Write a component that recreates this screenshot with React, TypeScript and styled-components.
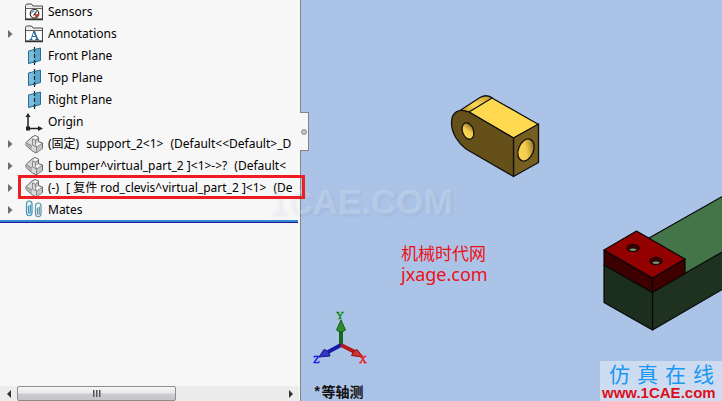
import React from "react";
import styled, { createGlobalStyle } from "styled-components";

const GlobalStyle = createGlobalStyle`
  * { box-sizing: border-box; }
  body { margin: 0; font-family: "Noto Sans", "Noto Sans CJK SC", sans-serif; }
`;

const Workspace = styled.div`
  position: relative;
  display: grid;
  grid-template-columns: 301px minmax(0, 1fr);
  height: 100vh;
  overflow: hidden;
  background: #abc3e6;
`;

const Panel = styled.aside`
  position: relative;
  display: flex;
  flex-direction: column;
  justify-content: space-between;
  min-height: 0;
  background: #f7f7f7;
  border-right: 1px solid #858585;
`;

const Tree = styled.ul`
  list-style: none;
  margin: 0 2px 0 0;
  padding: 1px 0;
  border-bottom: 1px solid #2616a0;
  box-shadow: inset 0 -2px #3289cb;
`;

const Row = styled.li`
  position: relative;
  display: grid;
  grid-template-columns: 24px 24px minmax(0, 1fr);
  align-items: center;
  height: 22px;
`;

const Expander = styled.button`
  display: flex;
  align-items: center;
  height: 20px;
  padding: 0 0 0 8px;
  border: 0;
  background: none;
`;

const Label = styled.span`
  grid-column: 3;
  display: flex;
  gap: 7px;
  overflow: hidden;
  white-space: nowrap;
  font-size: 12px;
  line-height: 22px;
  color: #000;
`;

const IconCell = styled.span`
  grid-column: 2;
  display: flex;
`;

const Highlight = styled.span`
  position: absolute;
  z-index: 3;
  inset: -2px -7px 0 18px;
  border: 3px solid #ee1c25;
  pointer-events: none;
`;

const Scroller = styled.div`
  display: flex;
  height: 15px;
  margin-right: 1px;
  background: #ececec;
`;

const ScrollButton = styled.button`
  display: flex;
  align-items: center;
  justify-content: center;
  width: 17px;
  padding: 0;
  border: 0;
  background: none;
`;

const Track = styled.div`
  flex: 1;
  display: flex;
`;

const Thumb = styled.button`
  display: flex;
  align-items: center;
  justify-content: center;
  gap: 1px;
  width: 60%;
  padding: 0;
  border: 1px solid #8d8d8d;
  border-radius: 2px;
  background: linear-gradient(#f6f6f6 0%, #e8e8e8 48%, #cdcdd0 52%, #c4c5c9 100%);
`;

const Grip = styled.i`
  width: 2px;
  height: 7px;
  background: linear-gradient(90deg, #555 50%, #999 50%);
`;

const Collapse = styled.button`
  position: absolute;
  z-index: 2;
  left: 300px;
  top: 112px;
  width: 9px;
  height: 39px;
  display: flex;
  align-items: center;
  justify-content: center;
  padding: 0;
  border: 1px solid #858585;
  border-left: 0;
  background: #f7f7f7;
`;

const Knob = styled.i`
  flex: none;
  width: 6px;
  height: 6px;
  border: 1px solid #8c8c8c;
  border-radius: 50%;
  background: #c6c6c6;
`;

const Viewport = styled.main`
  position: relative;
  overflow: hidden;
`;

const Drawing = styled.svg<{ $x: number; $y: number }>`
  position: absolute;
  left: ${(p) => p.$x}px;
  top: ${(p) => p.$y}px;
`;

const ViewName = styled.div`
  position: absolute;
  left: 12px;
  bottom: 0;
  font: bold 14px/16px "Liberation Mono", "Noto Sans CJK SC", monospace;
  color: #111;
`;

const SiteNote = styled.div`
  position: absolute;
  left: 100px;
  top: 244px;
  line-height: 20px;
  color: #ed1018;
`;

const SiteName = styled.div`
  font-size: 17px;
`;

const SiteHost = styled.div`
  font-size: 18px;
`;

const Watermark = styled.div`
  position: absolute;
  z-index: 2;
  left: 268px;
  top: 182px;
  font: bold 35px/40px "Liberation Sans", Arial, sans-serif;
  color: rgba(255, 255, 255, 0.2);
  text-shadow: 2px 2px 3px rgba(60, 90, 130, 0.08);
  pointer-events: none;
`;

const Badge = styled.div`
  position: absolute;
  right: 0;
  bottom: 0;
  width: 122px;
  height: 40px;
  padding-left: 2px;
  background: #cddcf1;
  white-space: nowrap;
`;

const BadgeTitle = styled.div`
  display: flex;
  justify-content: space-between;
  padding: 0 8px 0 7px;
  font: 21px/24px "KaiTi", "Noto Sans CJK SC", sans-serif;
  color: #1997f5;
`;

const BadgeLink = styled.a`
  display: block;
  font: bold 15px/16px "Liberation Sans", Arial, sans-serif;
  color: #dc101c;
  text-decoration: none;
`;

type Kind = "sensor" | "note" | "plane" | "origin" | "part" | "mates";

const Folder = () => (
  <>
    <path d="M1.500 17V3.500l1-1.500h5l1.500 2h9.500V17z" fill="#ececec" stroke="#4a4a4a" />
    <path d="M2 6.500h16" stroke="#666" />
    <path d="M3 7.500h14v8.500H3z" fill="#fff" />
    <path d="M1 17.500h18" stroke="#333" strokeWidth="1.500" />
  </>
);

function TreeIcon({ kind }: { kind: Kind }) {
  return (
    <svg width="20" height="20" viewBox="0 0 20 20" fill="none" aria-hidden="true">
      {kind === "sensor" && (
        <>
          <Folder />
          <circle cx="10.500" cy="11.800" r="4.300" fill="#fff" stroke="#333" strokeWidth="1.200" />
          <path d="M11 12h3.500a3.500 3.500 0 0 1-3.500 3.500z" fill="#e6402c" />
          <path d="M7.500 11.500a3 3 0 0 1 3-2.500" stroke="#3187b2" />
          <path d="M9.500 13.500l3-4" stroke="#222" strokeWidth="1.200" />
        </>
      )}
      {kind === "note" && (
        <>
          <Folder />
          <path d="M5.500 15.500h3M11 15.500h4M7 15.500l3-8.500" stroke="#286e99" />
          <path d="M10 7l3.500 8.500" stroke="#286e99" strokeWidth="1.800" />
          <path d="M8 12.500h4" stroke="#286e99" />
        </>
      )}
      {kind === "plane" && (
        <>
          <path d="M4.500 5l12-3v12.500l-12 3z" fill="#5ba9cf" stroke="#276e91" />
          <path d="M5 5.500l5-1.200v10.700l-5 1.200z" fill="#7dbddd" />
          <path d="M10.500 1v5M10.500 8v4M10.500 14v5" stroke="#222" strokeWidth="1.200" />
          <path d="M9 3.500h3M9 16.500h3" stroke="#276e91" />
        </>
      )}
      {kind === "origin" && (
        <>
          <path d="M4 4v12.500h11" stroke="#222" strokeWidth="1.500" />
          <path d="M1.500 5L4 1l2.500 4zM14 14l5 2.500-5 2.500zM2 14.500h4v4H2z" fill="#222" />
        </>
      )}
      {kind === "part" && (
        <g strokeLinejoin="round">
          <path d="M2 8.500L8 3l3-1.500L14.500 3v4.500L18.500 9v5.500L12 19l-3.500-2L2 11.500z" fill="#d9d9d9" stroke="#666" />
          <path d="M2.500 9l5.500 3v4L2.500 11.500z" fill="#b5b5b5" />
          <path d="M11.500 6L14 3.500v5l-2.500 1.500zM12.500 13l5.500-3.500v5l-5.500 4z" fill="#c4c4c4" />
          <path d="M9.500 3.500L11 2.200l3 1.300-2.500 1.500zM12 10l2-1.500 3.500 1.200-5 3z" fill="#fafafa" />
          <path d="M8.500 5l3 1.300v4.200L12.500 13v5M8.500 5v6l4 2 5.500-3.500M11.500 6.300L14 4.500M2.500 9L8 12" stroke="#777" strokeWidth=".8" />
        </g>
      )}
      {kind === "mates" && (
        <g stroke="#3b91b4" strokeWidth="1.200" strokeLinecap="round">
          <path d="M2.500 5v7c0 5 5.500 5 5.500 0V4c0-4-5.500-4-5.500 0M4.500 6v6c0 2 1.800 2 1.800 0V5" />
          <path d="M11.500 7v6c0 5 5.500 5 5.500 0V6c0-4-5.500-4-5.500 0M13.500 8v5c0 2 1.800 2 1.800 0V7" stroke="#5b93ad" />
        </g>
      )}
    </svg>
  );
}

const items: { kind: Kind; label: string[]; open?: boolean; marked?: boolean }[] = [
  { kind: "sensor", label: ["Sensors"] },
  { kind: "note", label: ["Annotations"], open: true },
  { kind: "plane", label: ["Front Plane"] },
  { kind: "plane", label: ["Top Plane"] },
  { kind: "plane", label: ["Right Plane"] },
  { kind: "origin", label: ["Origin"] },
  { kind: "part", label: ["(固定)", "support_2<1>", "(Default<<Default>_D"], open: true },
  { kind: "part", label: ["[ bumper^virtual_part_2 ]<1>->?", "(Default<"], open: true },
  { kind: "part", label: ["(-)", "[ 复件 rod_clevis^virtual_part_2 ]<1>", "(De"], open: true, marked: true },
  { kind: "mates", label: ["Mates"], open: true },
];

const Clevis = () => (
  <Drawing $x={145} $y={90} width="100" height="90" viewBox="446 90 100 90" aria-label="Rod clevis">
    <defs>
      <linearGradient id="round" x1="0" y1="1" x2="1" y2="0">
        <stop offset="0" stopColor="#b68d28" />
        <stop offset=".45" stopColor="#ffda56" />
        <stop offset="1" stopColor="#bd942f" />
      </linearGradient>
      <linearGradient id="bore" x1="0" y1="1" x2="1" y2="0">
        <stop offset="0" stopColor="#ffda56" />
        <stop offset=".5" stopColor="#f4cd4e" />
        <stop offset="1" stopColor="#665017" />
      </linearGradient>
    </defs>
    <g stroke="#111" strokeWidth="1.3" strokeLinejoin="round">
      <path d="M460 110.500L480 97.500q7-4 13 1l-23 14z" fill="url(#round)" />
      <path d="M469 112l23-14 46.500 26.500-25 13.500z" fill="#ffd94f" />
      <path d="M513.500 138l25-14v38.500l-25 14z" fill="#765e20" />
      <path d="M513.500 138v38.500L466 149c-8-6-14.500-16-14.500-26 0-11 7-15 17.500-11z" fill="#66501a" />
      <ellipse cx="468" cy="131" rx="5.500" ry="8.500" transform="rotate(-20 468 131)" fill="url(#bore)" />
      <ellipse cx="526" cy="150" rx="7.500" ry="11.500" transform="rotate(22 526 150)" fill="url(#bore)" />
    </g>
  </Drawing>
);

const Support = () => (
  <Drawing $x={299} $y={190} width="122" height="145" viewBox="600 190 122 145" aria-label="Support and bumper">
    <g stroke="#080808" strokeWidth="1.2" strokeLinejoin="round">
      <path d="M649 238l74-42v57l-38 22z" fill="#437548" />
      <path d="M652.500 292L723 251.500V289l-70.500 41z" fill="#1e321f" />
      <path d="M604 265l48.500 27.500V330L604 302.500z" fill="#1c2f1e" />
      <path d="M604 250l48.500 28v14.500L604 265z" fill="#3c0000" />
      <path d="M652.500 278L685 259v14.500l-32.500 19z" fill="#400000" />
      <path d="M604 250l32.500-19 48.500 28-32.500 19z" fill="#930000" />
      <ellipse cx="633" cy="248" rx="6" ry="3.500" fill="#410000" />
      <ellipse cx="656" cy="261" rx="6" ry="3.500" fill="#410000" />
    </g>
    <path d="M629 249.500q4-2 8 0-4 3-8 0M652 262.500q4-2 8 0-4 3-8 0" fill="#6c9b70" />
  </Drawing>
);

const Letter = styled.text`
  font: 11px "Liberation Serif", serif;
`;

const Triad = () => (
  <Drawing $x={9} $y={306} width="64" height="64" viewBox="310 306 64 64" aria-label="View axes">
    <path d="M341 345v-17" stroke="#176619" strokeWidth="4" />
    <path d="M341 345l-13 7" stroke="#1919a8" strokeWidth="4" />
    <path d="M341 345l14 7" stroke="#b61719" strokeWidth="4" />
    <path d="M341 320l-4.500 10q4.500 4 9 0z" fill="#2b8b2d" stroke="#165b17" />
    <path d="M319 357l5-7.500q5 1 6 6.500z" fill="#3434c8" stroke="#161680" />
    <path d="M363 357l-6-7.500q-4 1-5.500 6z" fill="#d83030" stroke="#851515" />
    <Letter x="336" y="319" fill="#07850c" stroke="#07850c" strokeWidth=".4">Y</Letter>
    <Letter x="313" y="363" fill="#1010f0" stroke="#1010f0" strokeWidth=".4">Z</Letter>
    <Letter x="359" y="363" fill="#f01010" stroke="#f01010" strokeWidth=".4">X</Letter>
  </Drawing>
);

export default function App() {
  return (
    <>
      <GlobalStyle />
      <Workspace>
        <Panel>
          <Tree>
            {items.map((item) => (
              <Row key={item.label.join(" ")}>
                {item.open && (
                  <Expander aria-label={`Expand ${item.label.join(" ")}`}>
                    <svg width="5" height="8" viewBox="0 0 5 8"><path d="M0 0l4.500 4L0 8z" fill="#6d6d6d" /></svg>
                  </Expander>
                )}
                <IconCell><TreeIcon kind={item.kind} /></IconCell>
                <Label>
                  {item.label.map((part) => <span key={part}>{part}</span>)}
                </Label>
                {item.marked && <Highlight />}
              </Row>
            ))}
          </Tree>
          <Scroller>
            <ScrollButton aria-label="Scroll left">
              <svg width="4" height="8" viewBox="0 0 4 8"><path d="M4 0L0 4l4 4z" fill="#333" /></svg>
            </ScrollButton>
            <Track>
              <Thumb aria-label="Scroll position"><Grip /><Grip /><Grip /></Thumb>
            </Track>
            <ScrollButton aria-label="Scroll right">
              <svg width="4" height="8" viewBox="0 0 4 8"><path d="M0 0l4 4-4 4z" fill="#333" /></svg>
            </ScrollButton>
          </Scroller>
        </Panel>
        <Viewport>
          <Clevis />
          <Support />
          <Triad />
          <SiteNote>
            <SiteName>机械时代网</SiteName>
            <SiteHost>jxage.com</SiteHost>
          </SiteNote>
          <ViewName>*等轴测</ViewName>
          <Badge>
            <BadgeTitle>
              {["仿", "真", "在", "线"].map((c) => <span key={c}>{c}</span>)}
            </BadgeTitle>
            <BadgeLink href="#">www.1CAE.com</BadgeLink>
          </Badge>
        </Viewport>
        <Collapse aria-label="Collapse panel"><Knob /></Collapse>
        <Watermark>1CAE.COM</Watermark>
      </Workspace>
    </>
  );
}
